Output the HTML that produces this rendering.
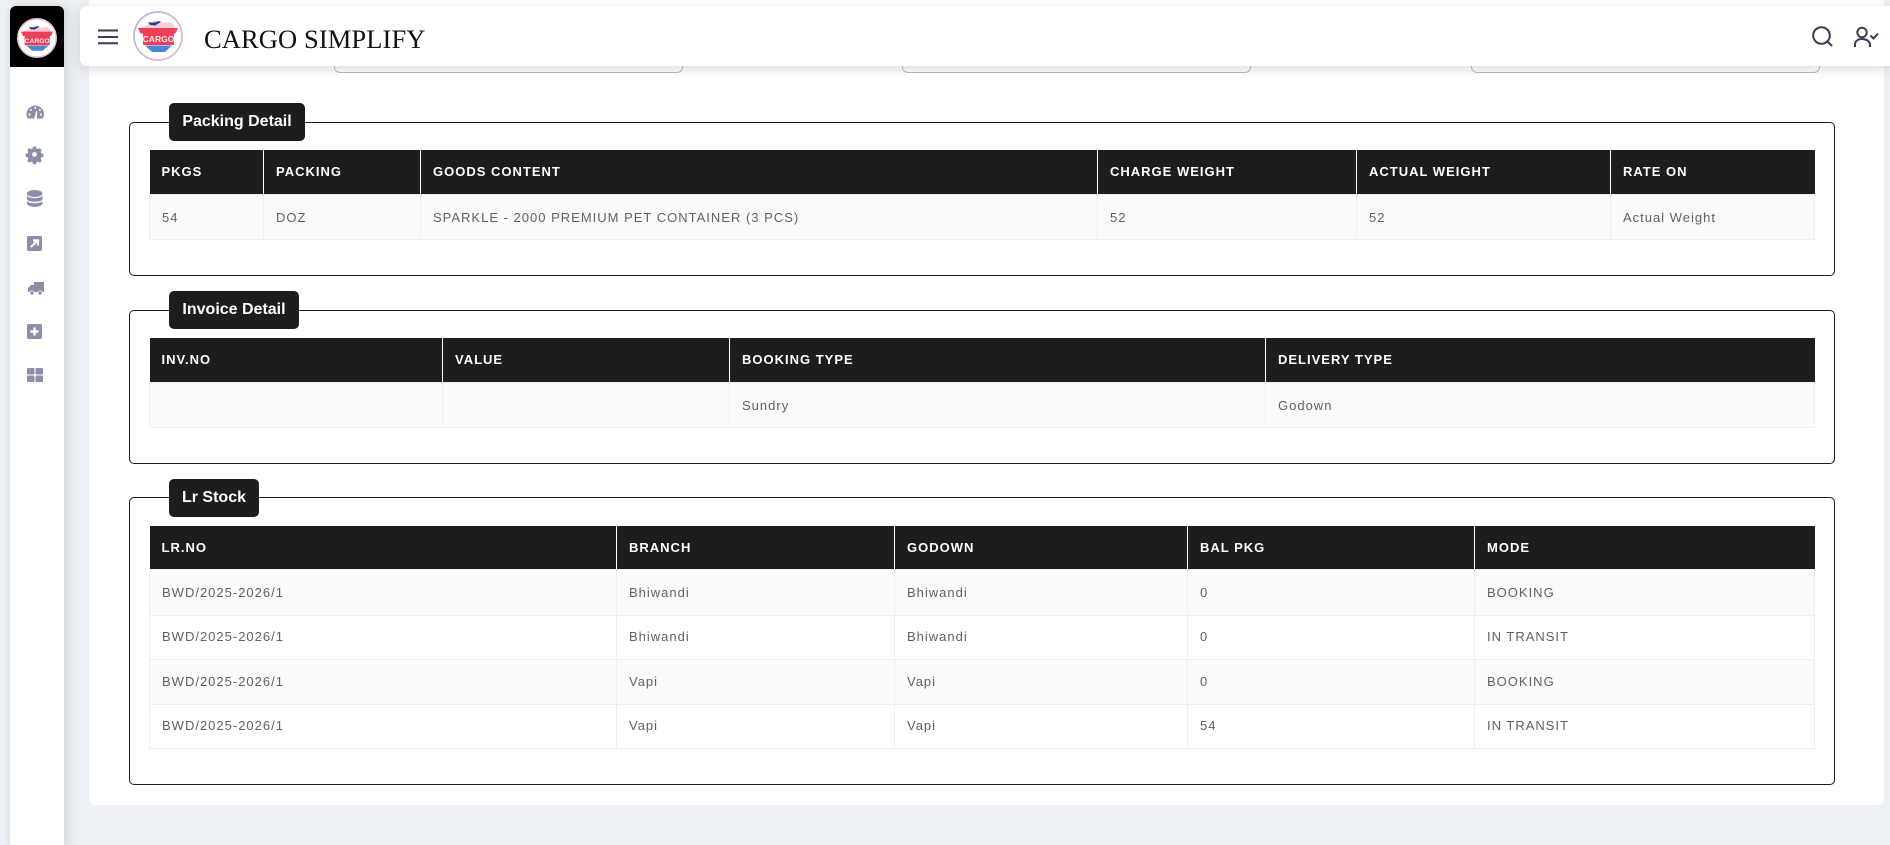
<!DOCTYPE html>
<html lang="en"><head><meta charset="utf-8"><title>Cargo Simplify</title>
<style>
*{box-sizing:border-box}
html,body{margin:0;padding:0;width:1890px;height:845px;overflow:hidden;background:#edf0f4;font-family:"Liberation Sans",Arial,sans-serif}
#wrap{position:absolute;left:0;top:0;width:1890px;height:845px;overflow:hidden}
.abs{position:absolute}
#panel{position:absolute;left:89px;top:-20px;width:1795px;height:825px;background:#fff;border-radius:6px}
#side{position:absolute;left:10px;top:6px;width:54px;height:839px;background:#fff;border-radius:6px 6px 0 0;box-shadow:4px 0 10px rgba(60,70,80,.16),-2px 0 6px rgba(60,70,80,.05)}
#sidetop{position:absolute;left:0;top:0;width:54px;height:61px;background:#000;border-radius:6px 6px 0 0}
#head{position:absolute;left:80px;top:6px;width:1810px;height:60px;background:#fff;border-radius:7px 0 0 7px;box-shadow:0 3px 12px rgba(40,40,50,.16)}
#title{position:absolute;left:204px;top:24px;font:26.5px/30px "Liberation Serif","Times New Roman",serif;letter-spacing:.1px;color:#111;white-space:nowrap}
.inp{position:absolute;top:50px;height:23px;border:1px solid #b9bbbe;border-radius:6px;background:#fff}
.fs{position:absolute;left:129px;width:1706px;border:1px solid #1e1d1c;border-radius:5px}
.lg{position:absolute;left:169px;height:38px;background:#1e1d1c;border-radius:5px;color:#fff;font:bold 16px/38px "Liberation Sans",Arial,sans-serif;text-align:center;white-space:nowrap}
table{position:absolute;left:149px;width:1665px;border-collapse:collapse;table-layout:fixed;font-size:13px;letter-spacing:1px}
th{background:#1e1d1c;color:#fff;font-weight:bold;text-align:left;padding:0 12px;border-right:1px solid #fff;white-space:nowrap}
th:last-child{border-right:0}
td{padding:1px 12px 0;color:#5f5f69;border:1px solid #eceef1;white-space:nowrap}
tbody tr:nth-child(odd) td{background:#fafafb}
tbody tr:nth-child(even) td{background:#fff}
.t3 tbody tr:nth-child(n+2) td{padding:0 12px 1px}
.t3 tbody tr:first-child td{padding:0 12px}
</style></head>
<body>
<div id="wrap">
<div id="panel"></div>

<div class="inp" style="left:334px;width:349px"></div>
<div class="inp" style="left:902px;width:349px"></div>
<div class="inp" style="left:1471px;width:349px"></div>

<div class="fs" style="top:122px;height:154px"></div>
<div class="lg" style="top:103px;width:136px">Packing Detail</div>
<table style="top:150px">
<colgroup><col style="width:114px"><col style="width:157px"><col style="width:677px"><col style="width:259px"><col style="width:254px"><col style="width:204px"></colgroup>
<thead><tr style="height:44px"><th>PKGS</th><th>PACKING</th><th>GOODS CONTENT</th><th>CHARGE WEIGHT</th><th>ACTUAL WEIGHT</th><th>RATE ON</th></tr></thead>
<tbody><tr style="height:45px"><td>54</td><td>DOZ</td><td>SPARKLE - 2000 PREMIUM PET CONTAINER (3 PCS)</td><td>52</td><td>52</td><td>Actual Weight</td></tr></tbody>
</table>

<div class="fs" style="top:310px;height:154px"></div>
<div class="lg" style="top:291px;width:130px">Invoice Detail</div>
<table style="top:338px">
<colgroup><col style="width:293px"><col style="width:287px"><col style="width:536px"><col style="width:549px"></colgroup>
<thead><tr style="height:44px"><th>INV.NO</th><th>VALUE</th><th>BOOKING TYPE</th><th>DELIVERY TYPE</th></tr></thead>
<tbody><tr style="height:45px"><td></td><td></td><td>Sundry</td><td>Godown</td></tr></tbody>
</table>

<div class="fs" style="top:497px;height:288px"></div>
<div class="lg" style="top:479px;width:90px">Lr Stock</div>
<table class="t3" style="top:526px">
<colgroup><col style="width:467px"><col style="width:278px"><col style="width:293px"><col style="width:287px"><col style="width:340px"></colgroup>
<thead><tr style="height:43px"><th>LR.NO</th><th>BRANCH</th><th>GODOWN</th><th>BAL PKG</th><th>MODE</th></tr></thead>
<tbody>
<tr style="height:46px"><td>BWD/2025-2026/1</td><td>Bhiwandi</td><td>Bhiwandi</td><td>0</td><td>BOOKING</td></tr>
<tr style="height:44px"><td>BWD/2025-2026/1</td><td>Bhiwandi</td><td>Bhiwandi</td><td>0</td><td>IN TRANSIT</td></tr>
<tr style="height:45px"><td>BWD/2025-2026/1</td><td>Vapi</td><td>Vapi</td><td>0</td><td>BOOKING</td></tr>
<tr style="height:44px"><td>BWD/2025-2026/1</td><td>Vapi</td><td>Vapi</td><td>54</td><td>IN TRANSIT</td></tr>
</tbody>
</table>

<div id="side"><div id="sidetop"></div></div>

<!-- sidebar logo -->
<svg class="abs" style="left:17px;top:18px" width="40" height="40" viewBox="0 0 100 100">
<circle cx="50" cy="50" r="48" fill="#fff" stroke="#e8c3d2" stroke-width="4"/>
<path d="M14 35L28 28 44 18 62 24 76 22 86 35Z" fill="#f8ccd4"/>
<path d="M30 22C38 24 44 24 52 20L56 22 44 29 34 28Z" fill="#23408f"/>
<path d="M10 34H90L85 45H15Z" fill="#ee3d57"/>
<rect x="19" y="44" width="63" height="24" rx="2" fill="#ee3d57"/>
<path d="M24 69H78L64 82H38Z" fill="#4a86d8"/>
<text x="50.500" y="62" text-anchor="middle" font-family="Liberation Sans,sans-serif" font-size="17" font-weight="bold" fill="#fde8ec">CARGO</text>
</svg>

<!-- sidebar icons -->
<svg class="abs" style="left:0;top:0" width="64" height="400" viewBox="0 0 64 400">
<g fill="#8a8ea8">
<path d="M27.500 118.500C26.700 116.500 26.500 115 26.500 113.500A8.800 8.800 0 0 1 44 113.500C44 115 43.800 116.500 43 118.500Z"/>
<g fill="#fff"><circle cx="35.300" cy="108" r="1"/><circle cx="30.800" cy="110" r="1"/><circle cx="39.800" cy="110" r="1"/><circle cx="29.500" cy="114.500" r="1"/><circle cx="41" cy="114.500" r="1"/><path d="M34.200 118.500L36.300 111 37.200 111.300 36.800 118.500Z"/></g>
<g transform="translate(0 -1.500)">
<path d="M33 148h3l.5 2.100 1.400.6 1.900-1.100 2 2-1.100 1.900.6 1.400 2.100.5v3l-2.100.5-.6 1.400 1.100 1.900-2 2-1.900-1.100-1.400.6-.5 2.100h-3l-.5-2.100-1.400-.6-1.900 1.100-2-2 1.100-1.900-.6-1.400-2.100-.5v-3l2.100-.5.6-1.400-1.100-1.900 2-2 1.900 1.100 1.400-.6Z"/>
<circle cx="34.500" cy="156" r="2.400" fill="#fff"/>
</g>
<ellipse cx="34.700" cy="193.500" rx="7.800" ry="3.500"/>
<path d="M27 195.500C29 199 40.500 199 42.500 195.500V199.500C40.500 202.500 29 202.500 27 199.500Z"/>
<path d="M27 201C29 204 40.500 204 42.500 201V204C40.500 207.800 29 207.800 27 204Z"/>
<rect x="27" y="236" width="15" height="15" rx="2"/>
<path d="M31 247L37 241M33 240.500H38V245.500" fill="none" stroke="#fff" stroke-width="2.200"/>
<path d="M34 282H44V292H28V288L31 285H34Z"/>
<circle cx="32" cy="293" r="2.500" fill="#fff"/><circle cx="40" cy="293" r="2.500" fill="#fff"/>
<circle cx="32" cy="293" r="1.700"/><circle cx="40" cy="293" r="1.700"/>
<rect x="27" y="324" width="15" height="15" rx="2"/>
<path d="M34.500 327.500V335.500M30.500 331.500H38.500" stroke="#fff" stroke-width="2.400" fill="none"/>
<rect x="27" y="368" width="7.500" height="6.500" rx="1"/><rect x="35.500" y="368" width="7.500" height="6.500" rx="1"/>
<rect x="27" y="375.500" width="7.500" height="6.500" rx="1"/><rect x="35.500" y="375.500" width="7.500" height="6.500" rx="1"/>
</g></svg>

<div id="head"></div>
<!-- hamburger -->
<svg class="abs" style="left:96px;top:26px" width="24" height="22" viewBox="0 0 24 22"><path d="M2 4.500H22M2 11H22M2 17.300H22" stroke="#3b3b55" stroke-width="2" fill="none"/></svg>
<!-- header logo -->
<svg class="abs" style="left:133px;top:11px" width="50" height="50" viewBox="0 0 100 100">
<defs><linearGradient id="rg" x1="0" y1="0" x2="1" y2="1"><stop offset="0" stop-color="#b7b4dc"/><stop offset="1" stop-color="#eab4cb"/></linearGradient></defs>
<circle cx="50" cy="50" r="48" fill="#fff" stroke="url(#rg)" stroke-width="3.500"/>
<path d="M14 35L28 28 44 18 62 24 76 22 86 35Z" fill="#f8ccd4"/>
<path d="M30 22C38 24 44 24 52 20L56 22 44 29 34 28Z" fill="#23408f"/>
<path d="M10 34H90L85 45H15Z" fill="#ee3d57"/>
<rect x="20" y="44" width="62" height="24" rx="2" fill="#ee3d57"/>
<path d="M24 69H78L64 82H38Z" fill="#4a86d8"/>
<text x="51" y="62" text-anchor="middle" font-family="Liberation Sans,sans-serif" font-size="17" font-weight="bold" fill="#fde8ec">CARGO</text>
</svg>
<div id="title">CARGO SIMPLIFY</div>
<!-- search & user -->
<svg class="abs" style="left:1805px;top:20px" width="80" height="32" viewBox="1805 20 80 32" fill="none" stroke="#3b3b52" stroke-width="2">
<circle cx="1821.500" cy="35.500" r="8.300"/><path d="M1827.500 41.500L1832 46"/>
<circle cx="1862" cy="32.500" r="4.700"/><path d="M1855 47V45C1855 41 1858 39 1862 39S1870 41 1870 45V47"/>
<path d="M1870.500 35.500L1873.500 38.500 1878 33.500"/>
</svg>
</div>
</body></html>
